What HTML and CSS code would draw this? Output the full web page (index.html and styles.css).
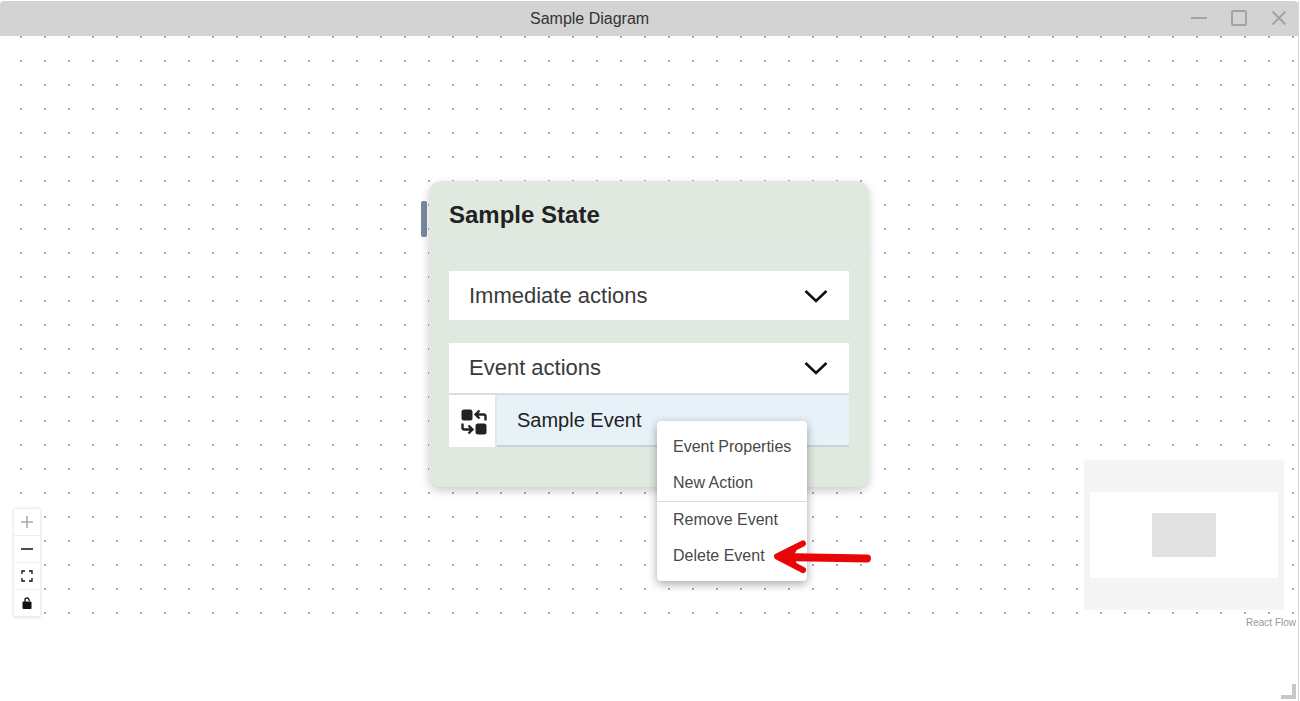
FILE: index.html
```html
<!DOCTYPE html>
<html lang="en">
<head>
<meta charset="utf-8">
<title>Sample Diagram</title>
<link rel="stylesheet" href="styles.css">
</head>
<body>
<div class="window">
  <header class="titlebar">
    <span class="title">Sample Diagram</span>
    <div class="win-buttons">
      <svg class="win-icon" viewBox="0 0 16 16"><path d="M0 8H16"/></svg>
      <svg class="win-icon" viewBox="0 0 16 16"><rect x="1" y="1" width="14" height="14" rx="1.5"/></svg>
      <svg class="win-icon" viewBox="0 0 16 16"><path d="M1.500 1.500L14.500 14.500M14.500 1.500L1.500 14.500"/></svg>
    </div>
  </header>
  <main class="flow">
    <svg class="dots" width="100%" height="100%">
      <defs>
        <pattern id="dot" x="20" y="0" width="24" height="24" patternUnits="userSpaceOnUse">
          <rect width="2" height="2" class="dot"/>
        </pattern>
      </defs>
      <rect width="100%" height="100%" fill="url(#dot)"/>
    </svg>

    <div class="state-handle"></div>
    <section class="state">
      <h2 class="state-title">Sample State</h2>
      <div class="state-body">
        <div class="accordion">
          <span>Immediate actions</span>
          <svg class="chevron" viewBox="0 0 24 14"><path d="M1.500 2L12 12L22.500 2"/></svg>
        </div>
        <div class="accordion accordion-open">
          <span>Event actions</span>
          <svg class="chevron" viewBox="0 0 24 14"><path d="M1.500 2L12 12L22.500 2"/></svg>
        </div>
        <div class="event-row">
          <div class="event-icon">
            <svg viewBox="0 0 26 26" width="26" height="26">
              <rect x="0.500" y="0.500" width="11" height="11" rx="2.500" class="fill"/>
              <rect x="14.500" y="14.500" width="11" height="11" rx="2.500" class="fill"/>
              <path class="arrow-line" d="M24.500 11.500V7.500a2 2 0 0 0-2-2H15M18.500 1.500L14.500 5.500L18.500 9.500"/>
              <path class="arrow-line" d="M1.500 14.500V18.500a2 2 0 0 0 2 2H11M7.500 16.500L11.500 20.500L7.500 24.500"/>
            </svg>
          </div>
          <div class="event-name">Sample Event</div>
        </div>
      </div>
    </section>

    <nav class="menu">
      <div class="menu-group">
        <div class="menu-item">Event Properties</div>
        <div class="menu-item">New Action</div>
      </div>
      <div class="menu-group menu-group-last">
        <div class="menu-item">Remove Event</div>
        <div class="menu-item">Delete Event</div>
      </div>
    </nav>

    <svg class="pointer" viewBox="0 0 100 36" width="100" height="36">
      <path class="pointer-shaft" d="M94 19.500L8 18"/>
      <path class="pointer-head" d="M30 4.500L4 17.500L30 31"/>
      <path class="pointer-fill" d="M4 17.500L24 9L20 17.500L24 26Z"/>
    </svg>

    <div class="controls">
      <button class="control" type="button"><svg viewBox="0 0 12 12"><path class="faint" d="M6 0V12M0 6H12"/></svg></button>
      <button class="control" type="button"><svg viewBox="0 0 12 12"><path d="M0 6H12"/></svg></button>
      <button class="control" type="button"><svg viewBox="0 0 12 12"><path class="thin" d="M1 4V1H4M8 1H11V4M11 8V11H8M4 11H1V8"/></svg></button>
      <button class="control" type="button"><svg viewBox="0 0 12 12"><path class="thin" d="M4 5V3.500a2 2 0 0 1 3.800-1.200L8.500 4"/><rect class="fill" x="1.500" y="4.500" width="9" height="7.500" rx="1"/></svg></button>
    </div>

    <div class="minimap">
      <div class="minimap-view"><div class="minimap-node"></div></div>
    </div>
  </main>
  <span class="attribution">React Flow</span>
  <div class="resize-grip"></div>
</div>
</body>
</html>
```
FILE: styles.css
```css
* { box-sizing: border-box; }

html, body {
  margin: 0;
  height: 100%;
  background: #fff;
  overflow: hidden;
}

body {
  font-family: "Liberation Sans", Arial, sans-serif;
  padding-top: 1px;
}

.window {
  position: relative;
  height: 700px;
  width: 1299px;
  display: flex;
  flex-direction: column;
  border-right: 1px solid #d8d8d8;
}

.titlebar {
  position: relative;
  flex: none;
  height: 35px;
  background: #d3d3d3;
  display: flex;
  align-items: center;
  padding-left: 530px;
  border-radius: 4px 4px 0 0;
}

.title {
  font-size: 16px;
  color: #333;
  margin-top: 1px;
}

.win-buttons {
  position: absolute;
  right: 11px;
  top: 9px;
  display: flex;
  gap: 24px;
}

.win-icon {
  width: 16px;
  height: 16px;
  fill: none;
  stroke: #a3a3a3;
  stroke-width: 2;
}

.flow {
  position: relative;
  flex: none;
  height: 580px;
}

.dots {
  position: absolute;
  inset: 0;
  display: block;
}

.dot { fill: #aaa; }

.state {
  position: absolute;
  left: 429px;
  top: 145px;
  width: 440px;
  height: 306px;
  background: #dfe9e0;
  border-radius: 12px;
  box-shadow: 0 4px 10px rgba(0, 0, 0, 0.2);
  padding: 0 20px;
}

.state-handle {
  position: absolute;
  left: 421px;
  top: 165px;
  width: 6px;
  height: 36px;
  border-radius: 2px;
  background: #788b9e;
}

.state-title {
  margin: 0;
  height: 70px;
  padding-top: 20px;
  font-size: 24px;
  line-height: 28px;
  font-weight: 700;
  color: #222;
  margin-inline: -20px;
  padding-inline: 20px;
  border-bottom: 1px solid #e2e9e6;
}

.state-body {
  padding-top: 20px;
}

.accordion {
  height: 51px;
  background: #fff;
  display: flex;
  align-items: center;
  justify-content: space-between;
  padding: 0 21px 0 20px;
  font-size: 22px;
  color: #3a3a3a;
  border-bottom: 2px solid #e3e3e3;
  margin-bottom: 21px;
}

.accordion-open {
  border-bottom: 2px solid #ddd;
  margin-bottom: 0;
  height: 52px;
}

.chevron {
  width: 24px;
  height: 14px;
  fill: none;
  stroke: #111;
  stroke-width: 2.600;
}

.event-row {
  display: flex;
  gap: 2px;
  height: 52px;
}

.event-icon {
  flex: none;
  width: 46px;
  height: 52px;
  background: #fff;
  padding: 2px 0 0 12px;
  display: flex;
  align-items: center;
}

.event-icon .fill { fill: #222; }

.arrow-line {
  fill: none;
  stroke: #222;
  stroke-width: 2.400;
}

.event-name {
  flex: 1;
  background: #e6f2f8;
  border-bottom: 2px solid #cad3db;
  height: 52px;
  padding: 0 20px;
  display: flex;
  align-items: center;
  font-size: 20px;
  color: #222;
}

.menu {
  position: absolute;
  left: 657px;
  top: 385px;
  width: 150px;
  height: 160px;
  background: #fff;
  border-radius: 4px;
  box-shadow: 0 3px 10px rgba(0, 0, 0, 0.35);
  padding-top: 8px;
  font-size: 16px;
  color: #484848;
}

.menu-group {
  border-bottom: 1px solid #ddd;
}

.menu-group-last {
  border-bottom: 0;
}

.menu-item {
  height: 36px;
  line-height: 36px;
  padding-left: 16px;
}

.pointer {
  position: absolute;
  left: 773px;
  top: 503px;
  fill: none;
  stroke: #e80606;
  stroke-linecap: round;
  stroke-linejoin: round;
}

.pointer-shaft { stroke-width: 8; }
.pointer-head { stroke-width: 6; }
.pointer-fill { fill: #e80606; stroke-width: 1; }

.controls {
  position: absolute;
  left: 14px;
  top: 473px;
  width: 26px;
  box-shadow: 0 0 3px rgba(0, 0, 0, 0.2);
}

.control {
  display: flex;
  align-items: center;
  justify-content: center;
  width: 26px;
  height: 27px;
  padding: 0;
  background: #fff;
  border: 0;
  border-bottom: 1px solid #eee;
}

.control svg {
  width: 12px;
  height: 12px;
  fill: none;
  stroke: #111;
  stroke-width: 1.500;
  display: block;
}

.control .faint { stroke: #aaa; }
.control .thin { stroke-width: 1.300; }
.control .fill { fill: #111; stroke: none; }

.minimap {
  position: absolute;
  left: 1084px;
  top: 424px;
  width: 200px;
  height: 150px;
  background: #f5f5f5;
  padding: 32px 6px;
}

.minimap-view {
  height: 86px;
  background: #fff;
  display: flex;
  align-items: center;
  justify-content: center;
}

.minimap-node {
  width: 64px;
  height: 44px;
  margin-top: -1px;
  border-radius: 2px;
  background: #e2e2e2;
}

.attribution {
  position: absolute;
  right: 2px;
  top: 615px;
  font-size: 10px;
  line-height: 13px;
  color: #999;
}

.resize-grip {
  position: absolute;
  right: 2px;
  bottom: 2px;
  width: 15px;
  height: 15px;
  border-right: 4px solid #c8c8c8;
  border-bottom: 4px solid #c8c8c8;
}
```
